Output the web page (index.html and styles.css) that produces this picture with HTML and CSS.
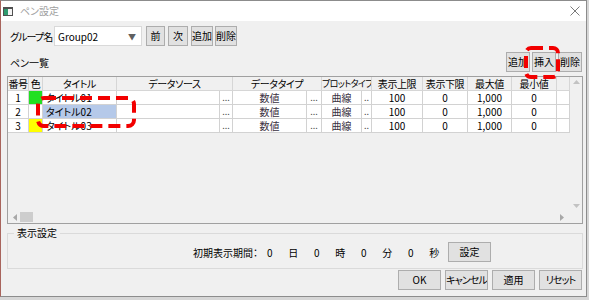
FILE: index.html
```html
<!DOCTYPE html>
<html lang="ja">
<head>
    <meta charset="UTF-8">
    <title>ペン設定</title>
    <link rel="stylesheet" href="styles.css">
</head>
<body>
    <div class="window">
        <div class="titlebar">
            <svg class="app-icon" viewBox="0 0 10 9">
                <rect x="0.5" y="0.5" width="9" height="8" fill="#f4f4f4" stroke="#505050"/>
                <rect x="1" y="2" width="4" height="6" fill="#2f9a6e"/>
                <rect x="1" y="1" width="8" height="1" fill="#505050"/>
            </svg>
            <span class="title">ペン設定</span>
            <svg class="close" viewBox="0 0 10 10">
                <path d="M0.5 0.5 L9.5 9.5 M9.5 0.5 L0.5 9.5" stroke="#7a7a7a" stroke-width="1"/>
            </svg>
        </div>

        <div class="content">
            <div class="group-row">
                <span class="group-label">グループ名</span>
                <div class="combo">
                    <span>Group02</span>
                    <span class="arrow">▼</span>
                </div>
                <button class="btn btn-prev">前</button>
                <button class="btn btn-next">次</button>
                <button class="btn btn-add">追加</button>
                <button class="btn btn-del">削除</button>
            </div>

            <div class="list-row">
                <span class="list-label">ペン一覧</span>
                <div class="list-buttons">
                    <button class="btn btn-small">追加</button>
                    <button class="btn btn-small">挿入</button>
                    <button class="btn btn-small">削除</button>
                </div>
            </div>

            <div class="grid">
                <div class="grid-main">
                    <div class="grid-body">
                        <div class="row head">
                            <div class="c w-no">番号</div>
                            <div class="c w-color">色</div>
                            <div class="c w-title">タイトル</div>
                            <div class="c w-src-h">データソース</div>
                            <div class="c w-type-h">データタイプ</div>
                            <div class="c w-plot-h tight">プロットタイプ</div>
                            <div class="c w-upper">表示上限</div>
                            <div class="c w-lower">表示下限</div>
                            <div class="c w-max">最大値</div>
                            <div class="c w-min">最小値</div>
                            <div class="c w-fill"></div>
                        </div>
                        <div class="row">
                            <div class="c w-no">1</div>
                            <div class="c w-color green"></div>
                            <div class="c w-title left">タイトル01</div>
                            <div class="c w-src"></div>
                            <div class="c w-dot dots">...</div>
                            <div class="c w-type soft">数値</div>
                            <div class="c w-dot2 dots">...</div>
                            <div class="c w-plot soft">曲線</div>
                            <div class="c w-dot3 dots">..</div>
                            <div class="c w-upper">100</div>
                            <div class="c w-lower">0</div>
                            <div class="c w-max">1,000</div>
                            <div class="c w-min">0</div>
                            <div class="c w-fill"></div>
                        </div>
                        <div class="row">
                            <div class="c w-no">2</div>
                            <div class="c w-color"></div>
                            <div class="c w-title left selected">タイトル02</div>
                            <div class="c w-src"></div>
                            <div class="c w-dot dots">...</div>
                            <div class="c w-type soft">数値</div>
                            <div class="c w-dot2 dots">...</div>
                            <div class="c w-plot soft">曲線</div>
                            <div class="c w-dot3 dots">..</div>
                            <div class="c w-upper">100</div>
                            <div class="c w-lower">0</div>
                            <div class="c w-max">1,000</div>
                            <div class="c w-min">0</div>
                            <div class="c w-fill"></div>
                        </div>
                        <div class="row">
                            <div class="c w-no">3</div>
                            <div class="c w-color yellow"></div>
                            <div class="c w-title left">タイトル03</div>
                            <div class="c w-src"></div>
                            <div class="c w-dot dots">...</div>
                            <div class="c w-type soft">数値</div>
                            <div class="c w-dot2 dots">...</div>
                            <div class="c w-plot soft">曲線</div>
                            <div class="c w-dot3 dots">..</div>
                            <div class="c w-upper">100</div>
                            <div class="c w-lower">0</div>
                            <div class="c w-max">1,000</div>
                            <div class="c w-min">0</div>
                            <div class="c w-fill"></div>
                        </div>
                    </div>
                    <div class="vscroll">
                        <svg viewBox="0 0 7 4"><polygon points="0,4 7,4 3.5,0" fill="#c2c2c2"/></svg>
                        <svg viewBox="0 0 7 4"><polygon points="0,0 7,0 3.5,4" fill="#c2c2c2"/></svg>
                    </div>
                </div>
                <div class="hscroll">
                    <svg class="h-left" viewBox="0 0 4 7"><polygon points="4,0 4,7 0,3.5" fill="#a8a8a8"/></svg>
                    <div class="thumb"></div>
                    <svg class="h-right" viewBox="0 0 4 7"><polygon points="0,0 0,7 4,3.5" fill="#a8a8a8"/></svg>
                    <div class="corner"></div>
                </div>
            </div>

            <fieldset class="display-box">
                <legend>表示設定</legend>
                <div class="period-row">
                    <span class="period-label">初期表示期間：</span>
                    <span class="val">0</span><span class="val">日</span>
                    <span class="val">0</span><span class="val">時</span>
                    <span class="val">0</span><span class="val">分</span>
                    <span class="val">0</span><span class="val">秒</span>
                    <button class="btn btn-set">設定</button>
                </div>
            </fieldset>

            <div class="footer">
                <button class="btn btn-foot">OK</button>
                <button class="btn btn-foot tight">キャンセル</button>
                <button class="btn btn-foot">適用</button>
                <button class="btn btn-foot tight">リセット</button>
            </div>
        </div>

        <svg class="mark mark-title" viewBox="0 0 100 32">
            <rect x="2" y="2" width="96" height="28" rx="6" fill="none" stroke="#f20000" stroke-width="4" stroke-dasharray="12 6"/>
        </svg>
        <svg class="mark mark-insert" viewBox="0 0 36 33">
            <rect x="2" y="2" width="32" height="29" rx="5" fill="none" stroke="#f20000" stroke-width="4" stroke-dasharray="12 6"/>
        </svg>
    </div>
</body>
</html>
```

FILE: styles.css
```css
* {
    box-sizing: border-box;
}

body {
    margin: 0;
    background: #d6d6d6;
    font-family: "Noto Sans CJK JP", "Noto Sans", sans-serif;
    font-size: 10px;
    font-feature-settings: "palt";
    white-space: nowrap;
    color: #000;
}

.window {
    position: relative;
    width: 587px;
    height: 297px;
    background: #f0f0f0;
    border: 1px solid #8c8c8c;
    border-left-color: #a8645c;
    overflow: hidden;
}

.titlebar {
    height: 20px;
    background: #fff;
    display: flex;
    align-items: center;
    padding-left: 2px;
}

.app-icon {
    width: 10px;
    height: 9px;
    margin-right: 7px;
}

.title {
    color: #a0a0a0;
    line-height: 14px;
}

.close {
    width: 10px;
    height: 10px;
    margin-left: auto;
    margin-right: 6px;
}

.content {
    padding: 5px 3px 0 6px;
}

.btn {
    height: 20px;
    padding: 0;
    background: #e1e1e1;
    border: 1px solid #adadad;
    font: inherit;
    color: #000;
    line-height: 16px;
    white-space: nowrap;
    overflow: hidden;
}

.tight {
    letter-spacing: -0.9px;
}

.group-row {
    display: flex;
    align-items: center;
    height: 20px;
}

.group-label {
    width: 44px;
    margin-left: 3px;
    letter-spacing: -0.9px;
}

.combo {
    width: 88px;
    height: 20px;
    background: #fff;
    border: 1px solid #d9d9d9;
    display: flex;
    align-items: center;
    padding-left: 3px;
}

.combo .arrow {
    margin-left: auto;
    margin-right: 5px;
    font-size: 8px;
    color: #606060;
}

.btn-prev { width: 19px; margin-left: 4px; }
.btn-next { width: 20px; margin-left: 3px; }
.btn-add { width: 22px; margin-left: 3px; }
.btn-del { width: 22px; margin-left: 2px; }

.list-row {
    display: flex;
    align-items: center;
    height: 20px;
    margin-top: 6px;
}

.list-label {
    margin-left: 3px;
}

.list-buttons {
    display: flex;
    gap: 2px;
    margin-left: auto;
    margin-right: 1px;
}

.btn-small {
    width: 24px;
}

.grid {
    margin-top: 4px;
    height: 148px;
    border: 1px solid #a0a0a0;
    display: flex;
    flex-direction: column;
}

.grid-main {
    display: flex;
    height: 134px;
}

.grid-body {
    width: 562px;
}

.row {
    display: flex;
    height: 14px;
}

.c {
    height: 14px;
    line-height: 13px;
    border-right: 1px solid #d2d2d2;
    border-bottom: 1px solid #d2d2d2;
    background: #fff;
    text-align: center;
    overflow: hidden;
}

.head .c {
    background: #f0f0f0;
    border-color: #d6d6d6;
    letter-spacing: -0.4px;
}

.head .tight {
    font-size: 9px;
    letter-spacing: -0.6px;
}

.w-no { width: 21px; }
.w-color { width: 14px; }
.w-title { width: 74px; }
.w-src { width: 103px; }
.w-dot { width: 13px; }
.w-type { width: 74px; }
.w-dot2 { width: 15px; }
.w-plot { width: 40px; }
.w-dot3 { width: 10px; }
.w-upper { width: 51px; }
.w-lower { width: 45px; }
.w-max { width: 44px; }
.w-min { width: 45px; }
.w-fill { width: 13px; }
.w-src-h { width: 116px; }
.w-type-h { width: 89px; }
.w-plot-h { width: 50px; }

.left {
    text-align: left;
    padding-left: 3px;
}

.green { background: #22e022; }
.yellow { background: #ffff00; }
.selected { background: #b5c9e9; }

.soft {
    color: #3a3040;
}

.dots {
    font-size: 9px;
    color: #505050;
}

.vscroll {
    width: 12px;
    display: flex;
    flex-direction: column;
    justify-content: space-between;
    align-items: center;
    padding: 3px 0 3px;
}

.vscroll svg {
    width: 7px;
    height: 4px;
}

.hscroll {
    display: flex;
    align-items: center;
    height: 12px;
}

.h-left {
    width: 4px;
    height: 7px;
    margin-left: 5px;
}

.thumb {
    width: 13px;
    height: 10px;
    margin-left: 3px;
    background: #cdcdcd;
}

.h-right {
    width: 4px;
    height: 7px;
    margin-left: auto;
    margin-right: 6px;
}

.corner {
    width: 12px;
    height: 12px;
}

.display-box {
    margin: 2px 0 0 0;
    padding: 2px 0 6px 0;
    border: 1px solid #dadada;
    min-inline-size: 0;
}

.display-box legend {
    margin-left: 6px;
    padding: 0 3px;
    line-height: 14px;
}

.period-row {
    display: flex;
    align-items: center;
    justify-content: flex-end;
    height: 20px;
    padding-right: 91px;
}

.val {
    width: 23.5px;
    text-align: center;
}

.btn-set {
    width: 43px;
    margin-left: 2px;
}

.footer {
    display: flex;
    justify-content: flex-end;
    gap: 4px;
    margin-top: 1px;
    padding-right: 1px;
}

.btn-foot {
    width: 43px;
}

.mark {
    position: absolute;
}

.mark-title {
    left: 35px;
    top: 95px;
    width: 100px;
    height: 32px;
}

.mark-insert {
    left: 523px;
    top: 45px;
    width: 36px;
    height: 33px;
}
```
